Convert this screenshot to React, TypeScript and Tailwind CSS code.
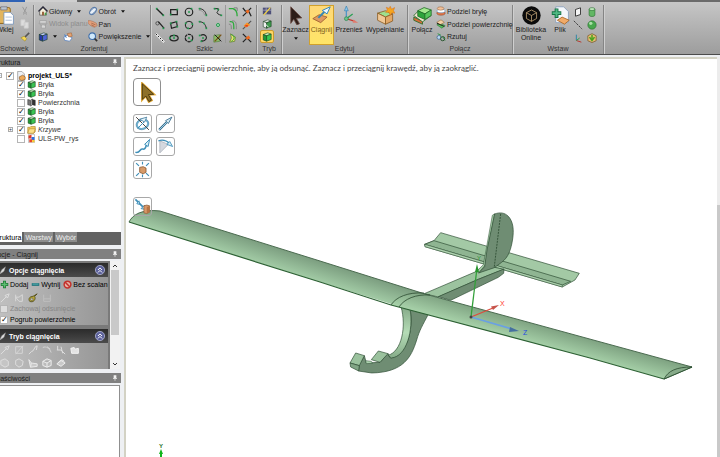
import React from 'react';

interface IconProps {
  size?: string;
  children: React.ReactNode;
}

const Icon: React.FC<IconProps> = ({ size = 'size-[10px]', children }) => (
  <svg viewBox="0 0 12 12" className={`${size} shrink-0`} fill="none" stroke="#222" strokeWidth="1.2" aria-hidden="true">
    {children}
  </svg>
);

const Dots = ({ at }: { at: number[][] }) => (
  <g fill="#1f9a4c" stroke="none">
    {at.map(([x, y], i) => (
      <rect key={i} x={x - 1} y={y - 1} width="2" height="2" />
    ))}
  </g>
);

const Caret = () => (
  <svg viewBox="0 0 6 4" className="w-[4px] h-[3px] shrink-0" aria-hidden="true">
    <path d="M0 0h6L3 4z" fill="#111" />
  </svg>
);

const Cube = ({ top, left, right }: { top: string; left: string; right: string }) => (
  <g stroke="#173d1c" strokeWidth=".7" strokeLinejoin="round">
    <path d="M1.5 3L7 1l4 1.5L5.500 4.500z" fill={top} />
    <path d="M1.500 3l4 1.500V11l-4-1.500z" fill={left} />
    <path d="M5.500 4.500l5.500-2V9l-5.500 2z" fill={right} />
  </g>
);

const greenCube = <Cube top="#c8f2c0" left="#1f9a35" right="#39c452" />;

const sketchTools = [
  { name: 'Linia', icon: <><path d="M2 2l8 8" strokeWidth="1.6" /><Dots at={[[2, 2], [10, 10]]} /></> },
  { name: 'Prostokąt', icon: <><path d="M2 3h8v6H2z" strokeWidth="1.5" /><Dots at={[[2, 9], [10, 3]]} /></> },
  { name: 'Okrąg', icon: <><circle cx="6" cy="6" r="4.500" strokeWidth="1.4" /><Dots at={[[6, 6], [9, 2]]} /></> },
  { name: 'Łuk styczny', icon: <><path d="M1 2c5 0 8 3 9 8" /><path d="M1 4c4 0 6 2 7 6" stroke="#888" strokeWidth=".8" /><Dots at={[[2, 2], [10, 10]]} /></> },
  { name: 'Splajn', icon: <><path d="M1 2h5c2 0 0 3-1 4s1 3 5 4" /><Dots at={[[2, 2], [6, 3], [10, 10]]} /></> },
  { name: 'Linia styczna', icon: <><circle cx="3" cy="4" r="2" stroke="#555" /><path d="M4 2l7 8" strokeWidth="1.5" /><Dots at={[[10, 10]]} /></> },
  { name: 'Prostokąt trzypunktowy', icon: <><path d="M2 4l7-2 1 6-7 2z" strokeWidth="1.4" /><Dots at={[[2, 4], [10, 8], [9, 2]]} /></> },
  { name: 'Okrąg trzypunktowy', icon: <><circle cx="6" cy="6" r="4.500" /><Dots at={[[2, 4], [10, 5], [5, 10]]} /></> },
  { name: 'Łuk trzypunktowy', icon: <><path d="M1 2c5 0 8 3 9 8" /><Dots at={[[2, 2], [7, 4], [10, 10]]} /></> },
  { name: 'Punkt', icon: <><circle cx="6" cy="6" r="1.800" stroke="#1f9a4c" fill="#b7e4c0" /></> },
  { name: 'Linia konstrukcyjna', icon: <><path d="M1 1l10 10" stroke="#eee" strokeWidth="2.500" /><path d="M1 1l10 10" strokeDasharray="2 1.500" /></> },
  { name: 'Elipsa', icon: <><ellipse cx="6" cy="6" rx="5" ry="3.300" strokeWidth="1.500" /><Dots at={[[6, 6], [6, 3], [1, 6]]} /></> },
  { name: 'Wielokąt', icon: <><circle cx="6" cy="6" r="4.500" strokeWidth="1.500" strokeDasharray="4 .8" /><Dots at={[[6, 6], [9, 9]]} /></> },
  { name: 'Łuk', icon: <><path d="M3 3c5-3 9 2 6 5-2 2-4 2-5 1" strokeWidth="1.4" /><Dots at={[[2, 3], [6, 6], [4, 10]]} /></> },
  { name: 'Krzywa powierzchni', icon: <><path d="M1 3l7-1v8l-7 1z" fill="#8dbb6a" stroke="#4d7d35" strokeWidth=".7" /><path d="M2 10l8-8" stroke="#7a5216" strokeWidth="1.500" /><path d="M2 2l8 8" /></> },
];

const trimTools = [
  { name: 'Zaokrąglij róg', icon: <><path d="M1 2h5c3 1 5 4 5 9" stroke="#2eaa3c" strokeWidth="1.600" /><path d="M7 1h4v4" strokeWidth=".8" stroke="#666" /></> },
  { name: 'Przytnij', icon: <><path d="M1 1l3 4 4 0 3 6M11 1L1 11" strokeWidth="1.500" /><path d="M4 5l3-2 2 2-2 3z" fill="#f06a20" stroke="none" /></> },
  { name: 'Odsuń krzywą', icon: <><path d="M2 2c5-1 5 2 5 9" stroke="#2eaa3c" strokeWidth="1.500" /><path d="M5 1c5 0 5 3 5 10M1 5c3 0 3 2 3 6" strokeWidth=".9" stroke="#777" /></> },
  { name: 'Podziel krzywą', icon: <><path d="M1 11L11 1" stroke="#555" strokeWidth="1.400" /><path d="M2 7l4-4 4 3-5 3z" fill="#f79224" stroke="none" /><path d="M4 6h3v2H4z" fill="#e43c20" stroke="none" /></> },
  { name: 'Rzutuj na szkic', icon: <><path d="M3 1l6 4-1 5-6 1 2-5z" fill="#e8de70" stroke="#557a22" strokeWidth=".8" /><path d="M4 2c5 2 4 6 0 8" stroke="#2eaa3c" /></> },
  { name: 'Utwórz róg', icon: <><path d="M1 1l10 10M1 11L7 5" strokeWidth="1.500" /><path d="M4 6l4-3 2 3-3 2z" fill="#f06a20" stroke="none" /></> },
];

const ribbonArt = {
  paste: <><rect x="1" y="1" width="8" height="10" rx="1" fill="#e2b55e" stroke="#8d6218" strokeWidth=".6" /><path d="M3 .500h4v2H3z" fill="#b9c4cf" stroke="#667" strokeWidth=".4" /><path d="M5 4h4l2 2v5.500H5z" fill="#fff" stroke="#6f8fb8" strokeWidth=".5" /><path d="M6 7h4M6 9h4" stroke="#9cb4d4" strokeWidth=".5" /></>,
  cut: <path d="M3 1l4 7M8 1L5 8M4 10a1 1 0 100-2M8 10a1 1 0 110-2" stroke="#999" />,
  copy: <path d="M1 1h5v7H1zM5 4h5v7H5z" fill="#ddd" stroke="#ccc" strokeWidth=".8" />,
  brush: <><path d="M11 1L6 6" stroke="#555" strokeWidth="2" /><path d="M1 7l4-2 3 3-2 3z" fill="#f5d750" stroke="#937d25" strokeWidth=".6" /></>,
  home: <><path d="M2 6v5h8V6L6 2z" fill="#f5efdc" stroke="#444" strokeWidth=".8" /><path d="M.500 6.500L6 1l5.500 5.500" strokeWidth="1.500" stroke="#223" /><path d="M5 7h2v4H5z" fill="#8a4a22" stroke="none" /><path d="M8 8h2v3H8z" fill="#48a148" stroke="none" /></>,
  plan: <><path d="M2 2h8v3H2zM4 7h5v4H4zM1 5l3 3M11 5L8 8" stroke="#999" fill="#d8d8d8" strokeWidth=".8" /></>,
  blueCube: <Cube top="#c4ccff" left="#2436a8" right="#4e63d8" />,
  spin: <><ellipse cx="6" cy="6" rx="3" ry="5" transform="rotate(40 6 6)" fill="#e8eff7" stroke="#5a7ba8" /><ellipse cx="6" cy="6" rx="5.500" ry="2.200" transform="rotate(-40 6 6)" stroke="#5a7ba8" strokeWidth=".8" /></>,
  hand: <><path d="M0 2h3l3 1 4 2 1 3-3 2-3-1-3-2-2-2z" fill="#e2a07c" stroke="#a5694c" strokeWidth=".6" /><path d="M4 5l5 2M4 7l4 2" stroke="#8c4c30" strokeWidth=".7" /></>,
  lens: <><circle cx="5" cy="5" r="4" fill="#cfe8fb" stroke="#3f6da8" strokeWidth="1.300" /><path d="M8 8l3 3" stroke="#333" strokeWidth="2" /></>,
  view: <><path d="M1 6l4-2 6 3-3 4-6-1z" fill="#fff" stroke="#4a78c0" strokeWidth=".8" /><path d="M5 2l5-1 1 4-4 1z" fill="#e6a370" stroke="#965b30" strokeWidth=".6" /><path d="M2 3l2 4" stroke="#3d7ccc" /></>,
  sketchMode: <><path d="M1 2h10v8H1z" fill="#4d4f78" stroke="none" /><path d="M1 5h10M5 2v8" stroke="#d2d2e8" strokeWidth=".6" /><path d="M2 11l8-9" stroke="#f0d346" strokeWidth="1.600" /></>,
  section: <><Cube top="#e3e9e3" left="#f1f1f1" right="#3d9b4c" /><path d="M3 5l5 5" stroke="#eee" /></>,
  solid: greenCube,
  cursor: <path d="M3 .500l7 7-3.500.2 2 3.500-1.600.8-2-3.600L3 11z" fill="#2d1d18" stroke="#6b4b42" strokeWidth=".5" />,
  pull: <><path d="M.500 8l4-2.500 5 1.500-4 3.500z" fill="#dd9a62" stroke="#9a5a28" strokeWidth=".5" /><path d="M4 7.500l4-4" stroke="#3a86b4" strokeWidth="1.300" /><path d="M11.500.500L9.500 5 6.500 2.800z" fill="#eaf7ff" stroke="#2d83b8" strokeWidth=".6" /></>,
  move: <><path d="M4 8V2" stroke="#4c95c8" strokeWidth=".8" /><path d="M4 0L2.800 3h2.400z" fill="#8fc8ec" stroke="#337eb0" strokeWidth=".4" /><path d="M4 8l5 1.500" stroke="#c23c33" strokeWidth=".8" /><path d="M11.500 10.500L8.500 8.500l-.5 2z" fill="#e07a6c" stroke="none" /><path d="M4 8l4-3" stroke="#29a054" strokeWidth=".8" /><circle cx="4" cy="8" r="1.200" fill="#6dc289" stroke="#257f49" strokeWidth=".4" /></>,
  fill: <><g stroke="#8a5a20" strokeWidth=".5"><path d="M1 4.500l5-1.500 4.500 2L6 7z" fill="#9de08f" /><path d="M1 4.500L6 7v4.500L1 9z" fill="#f1c896" /><path d="M6 7l4.500-2v4.500L6 11.500z" fill="#e2a868" /></g><path d="M9 .200l.8 1.800L11.800 1 11 3l1 1.500-2-.2-1 1.500-.8-1.800L6 4l1.200-1.500L6.500.800l1.800.7z" fill="#f5a51d" stroke="#d86813" strokeWidth=".3" /></>,
  combine: <g stroke="#1f6a25" strokeWidth=".5"><path d="M.500 7L6 9.500v2L.500 9z" fill="#d56c39" /><path d="M.500 6l3-3 8 3-5.500 4z" fill="#f2e4d0" /><path d="M3 3l4-2 4.500 1.500-4 2.500z" fill="#a5e990" /><path d="M3 3l4.500 2v3.500L3 6.500z" fill="#2da43c" /><path d="M7.500 5l4-2.500V6l-4 2.500z" fill="#58c65c" /></g>,
  splitBody: <g strokeWidth=".6"><ellipse cx="6" cy="8.500" rx="5" ry="2.500" fill="#e2784a" stroke="#8c3f1d" /><ellipse cx="6" cy="6" rx="5" ry="2.200" fill="#fff" stroke="#3f7fb8" /><ellipse cx="5.500" cy="3" rx="4" ry="2" fill="#f3c29b" stroke="#8c5a30" /></g>,
  splitFace: <g strokeWidth=".6"><path d="M1 7l6 4 4-3-6-3z" fill="#57c45d" stroke="#1c6c28" /><path d="M1 4l5-3 4 3-5 3z" fill="#f3d2a8" stroke="#845622" /><path d="M1 5l9 4" stroke="#222" strokeWidth="1.200" /></g>,
  project: <><path d="M2 2l4 2M8 6l3 4" stroke="#2b9b45" /><circle cx="3.500" cy="6.500" r="2.300" fill="#b9d8f2" stroke="#335d8c" strokeWidth=".8" /><circle cx="8" cy="8" r="2.500" stroke="#2a5630" /></>,
  library: <><circle cx="6" cy="6" r="5.800" fill="#0b0b0b" stroke="none" /><path d="M6 2.500l3.200 1.700v3.700L6 9.700 2.800 7.900V4.200zM2.800 4.200L6 6l3.200-1.800M6 6v3.700" stroke="#c5a679" strokeWidth=".5" /></>,
  file: <><path d="M3 .500h5l3 3v7H3z" fill="#f4f7fb" stroke="#8399b8" strokeWidth=".5" /><path d="M4 9l3-2 4.500 2-3 2.500z" fill="#f0ab68" stroke="#a4601f" strokeWidth=".5" /><path d="M3.500 1.500v6M.500 4.500h6" stroke="#167344" strokeWidth="2.400" /><path d="M3.500 2v5M1 4.500h5" stroke="#51b884" strokeWidth="1.200" /></>,
  plane: <path d="M3 3l6-2v8l-6 2z" fill="#f5f5f5" strokeWidth="1" />,
  axis: <path d="M1 1l10 10" stroke="#444" strokeDasharray="3 1.200" />,
  origin: <><path d="M4 9V2" stroke="#2f86a8" /><path d="M4 9l6 2" stroke="#b83a31" /><path d="M4 9l4-3" stroke="#2fa04c" /></>,
  cylinder: <><path d="M2.500 2.500v7c0 2.500 7 2.500 7 0v-7" fill="#63b765" stroke="#276b2e" strokeWidth=".7" /><ellipse cx="6" cy="2.500" rx="3.500" ry="1.700" fill="#c2eabf" stroke="#276b2e" strokeWidth=".7" /></>,
  sphere: <><circle cx="6" cy="6" r="5" fill="#48a74d" stroke="#276b2e" strokeWidth=".7" /><circle cx="4.500" cy="4" r="2" fill="#a9dfa6" stroke="none" /></>,
  shell: <><path d="M6 .800l5 2.500v6L6 11.500l-5-2.200v-6z" fill="#e4bd73" stroke="#765020" strokeWidth=".8" /><path d="M6 2v5M3 5l3 4 3-4" stroke="#45a31d" strokeWidth="1.800" /></>,
};

const Group = ({ label, className = '', children }: { label: string; className?: string; children: React.ReactNode }) => (
  <section className={`flex flex-col shrink-0 border-r border-[#858585] shadow-[1px_0_0_#cfcfcf] ${className}`}>
    <div className="flex h-[38px]">{children}</div>
    <h2 className="h-[12px] leading-[12px] text-center text-[#333]">{label}</h2>
  </section>
);

const SmallButton = ({ art, label, caret, muted }: { art: React.ReactNode; label: string; caret?: boolean; muted?: boolean }) => (
  <button className={`flex items-center gap-px h-[13px] whitespace-nowrap ${muted ? 'text-[#8c8c8c]' : ''}`}>
    <Icon>{art}</Icon>
    {label}
    {caret && <span className="pl-1"><Caret /></span>}
  </button>
);

const BigButton = ({ art, label, caret, className = '' }: { art: React.ReactNode; label: string; caret?: boolean; className?: string }) => (
  <button className={`flex flex-col items-center h-[40px] pt-px shrink-0 ${className}`}>
    <Icon size="size-[19px]">{art}</Icon>
    <span className="leading-[8px] pt-px whitespace-pre-line text-center">{label}</span>
    {caret && <span className="pt-[3px] flex"><Caret /></span>}
  </button>
);

const IconButton = ({ art, name, className = 'w-[14px]' }: { art: React.ReactNode; name: string; className?: string }) => (
  <button aria-label={name} className={`flex items-center justify-center h-[13px] ${className}`}>
    <Icon>{art}</Icon>
  </button>
);

const Ribbon = () => (
  <header className="shrink-0 overflow-hidden text-[#1c1c1c]">
    <div className="flex h-[2px] bg-[#6a6a6a]">
      <div className="w-[25px] bg-[#2f62b5]" />
      <div className="w-[52px] bg-[#cfcfcf]" />
    </div>
    <div className="flex h-[53px] pt-[3px] bg-linear-to-b from-[#c6c6c6] to-[#9d9d9d] border-b border-[#4b4b4b]">
      <Group label="Schowek" className="w-[34px] pr-[5px]">
        <BigButton art={ribbonArt.paste} label="Wklej" className="w-[26px] -ml-[8px]" />
        <div className="flex flex-col shrink-0">
          <IconButton art={ribbonArt.cut} name="Wytnij" />
          <IconButton art={ribbonArt.copy} name="Kopiuj" />
          <IconButton art={ribbonArt.brush} name="Malarz formatów" />
        </div>
      </Group>
      <Group label="Zorientuj" className="w-[117px] pl-[4px]">
        <div className="flex flex-col items-start w-[50px]">
          <SmallButton art={ribbonArt.home} label="Główny" caret />
          <SmallButton art={ribbonArt.plan} label="Widok planu" muted />
          <div className="flex items-center">
            <SmallButton art={ribbonArt.blueCube} label="" caret />
            <span className="pl-1 flex"><IconButton art={ribbonArt.view} name="Poprzedni widok" /></span>
          </div>
        </div>
        <div className="flex flex-col items-start">
          <SmallButton art={ribbonArt.spin} label="Obrót" caret />
          <SmallButton art={ribbonArt.hand} label="Pan" />
          <SmallButton art={ribbonArt.lens} label="Powiększenie" caret />
        </div>
      </Group>
      <Group label="Szkic" className="w-[106px] pl-[2px]">
        <div className="grid grid-cols-5 w-[73px] border-r border-[#999]">
          {sketchTools.map((tool) => (
            <IconButton key={tool.name} art={tool.icon} name={tool.name} />
          ))}
        </div>
        <div className="grid grid-cols-2 w-[28px]">
          {trimTools.map((tool) => (
            <IconButton key={tool.name} art={tool.icon} name={tool.name} />
          ))}
        </div>
      </Group>
      <Group label="Tryb" className="w-[25px] px-[3px]">
        <div className="flex flex-col">
          <IconButton art={ribbonArt.sketchMode} name="Tryb szkicu" className="w-[14px]" />
          <IconButton art={ribbonArt.section} name="Tryb przekroju" className="w-[14px]" />
          <IconButton art={ribbonArt.solid} name="Tryb 3D" className="w-[14px] rounded-xs border border-[#c99b2c] bg-[#ffd763]" />
        </div>
      </Group>
      <Group label="Edytuj" className="w-[126px]">
        <BigButton art={ribbonArt.cursor} label="Zaznacz" caret className="w-[27px]" />
        <BigButton
          art={ribbonArt.pull}
          label="Ciągnij"
          className="w-[25px] outline outline-[#d0a02c] -outline-offset-1 bg-linear-to-b from-[#ffd878] to-[#ffe566] text-[#7a5c1a]"
        />
        <BigButton art={ribbonArt.move} label="Przenieś" className="w-[30px]" />
        <BigButton art={ribbonArt.fill} label="Wypełnianie" className="w-[42px]" />
      </Group>
      <Group label="Połącz" className="w-[105px]">
        <BigButton art={ribbonArt.combine} label="Połącz" className="w-[28px]" />
        <div className="flex flex-col items-start">
          <SmallButton art={ribbonArt.splitBody} label="Podziel bryłę" />
          <SmallButton art={ribbonArt.splitFace} label="Podziel powierzchnię" />
          <SmallButton art={ribbonArt.project} label="Rzutuj" />
        </div>
      </Group>
      <Group label="Wstaw" className="w-[91px]">
        <BigButton art={ribbonArt.library} label={'Biblioteka\nOnline'} className="w-[36px]" />
        <BigButton art={ribbonArt.file} label="Plik" className="w-[22px]" />
        <div className="grid grid-cols-2">
          <IconButton art={ribbonArt.plane} name="Płaszczyzna" />
          <IconButton art={ribbonArt.cylinder} name="Walec" />
          <IconButton art={ribbonArt.axis} name="Oś" />
          <IconButton art={ribbonArt.sphere} name="Kula" />
          <IconButton art={ribbonArt.origin} name="Początek" />
          <IconButton art={ribbonArt.shell} name="Powłoka" />
        </div>
      </Group>
    </div>
  </header>
);

const PaneTitle = ({ children }: { children: React.ReactNode }) => (
  <h2 className="flex items-center justify-between h-[10px] pr-1 bg-[#808080] text-[#1a1a1a] shrink-0">
    {children}
    <svg viewBox="0 0 6 8" className="w-[4px] h-[6px]" aria-hidden="true">
      <path d="M1 0h4v4h1v1H0V4h1zM2.500 5h1v3h-1z" fill="#f2f2f2" />
    </svg>
  </h2>
);

const Check = ({ checked, muted }: { checked?: boolean; muted?: boolean }) => (
  <input
    type="checkbox"
    defaultChecked={checked}
    disabled={muted}
    className="appearance-none size-[8px] shrink-0 border border-[#b5b5b5] bg-white disabled:bg-[#ddd] text-black leading-[6px] text-center checked:before:content-['✓'] before:block before:font-bold before:text-[8px] before:font-['DejaVu_Sans']"
  />
);

const treeArt = {
  body: greenCube,
  surface: <g stroke="#222" strokeWidth=".6"><path d="M1 2l4 1v7L1 9z" fill="#777" /><path d="M5 3l2-2v8l-2 2z" fill="#ccc" /><path d="M7 2l4 1v7L7 9z" fill="#333" /></g>,
  folder: <><path d="M1 3h3l1-1h6v7l-2 2H1z" fill="#f3c95e" stroke="#9d7118" strokeWidth=".7" /><path d="M1 11l2-6h8l-2 6z" fill="#fbe08a" stroke="#9d7118" strokeWidth=".6" /></>,
  drawing: <><path d="M2 .500h8v11H2z" fill="#fff" stroke="#888" strokeWidth=".6" /><path d="M2 2l4-1v5H2z" fill="#e03a2b" stroke="none" /><path d="M6 4h4v4H6z" fill="#2b6fe0" stroke="none" /><path d="M3 7h4v4H3z" fill="#e8452b" stroke="none" /><path d="M7 8h3v3H7z" fill="#f5c928" stroke="none" /></>,
  project: <><path d="M2 .500h5l3 3v8H2z" fill="#eef1f6" stroke="#777" strokeWidth=".7" /><path d="M4 7l4-2 3 2v3l-4 1.500L4 10z" fill="#edaa5a" stroke="#7d4c1c" strokeWidth=".7" /></>,
};

const treeItems = [
  { name: 'Bryła', art: treeArt.body, checked: true },
  { name: 'Bryła', art: treeArt.body, checked: true },
  { name: 'Powierzchnia', art: treeArt.surface, checked: false },
  { name: 'Bryła', art: treeArt.body, checked: true },
  { name: 'Bryła', art: treeArt.body, checked: true },
  { name: 'Krzywe', art: treeArt.folder, checked: true, expandable: true, italic: true },
  { name: 'ULS-PW_rys', art: treeArt.drawing, checked: false },
];

const Expander = ({ sign }: { sign: string }) => (
  <button className="flex items-center justify-center size-[5px] border border-[#aaa] bg-white text-[5px] leading-none">{sign}</button>
);

const OptionsHeader = ({ children }: { children: React.ReactNode }) => (
  <div className="flex items-center h-[14px] pl-[4px] pr-[3px] bg-linear-to-b from-[#2b2b2b] to-[#4b4b4b] text-white font-bold">
    <Icon size="size-[9px]"><path d="M2 11l3-6 5-4-2 6z" fill="#ddd" stroke="#888" strokeWidth=".6" /></Icon>
    <h3 className="flex-1 pl-[2px]">{children}</h3>
    <button aria-label="Zwiń">
      <Icon><circle cx="6" cy="6" r="5.500" fill="#5d629c" stroke="#c4c8e8" strokeWidth=".8" /><path d="M3.500 6L6 3.500 8.500 6M3.500 9L6 6.500 8.500 9" stroke="#fff" /></Icon>
    </button>
  </div>
);

const faded = [
  <path d="M1 11l7-7M6 3l5-2-2 5z" stroke="#ddd" />,
  <path d="M2 2h8v8H2zM2 11l9-10" stroke="#d4d4d4" />,
  <path d="M1 11l3-3 2-1 3-5 2-1-1 5" stroke="#ddd" />,
  <path d="M1 3c4-2 8 1 10 6M6 2l4 3" stroke="#d4d4d4" />,
  <path d="M2 1v5M1 6h5l5 5M6 2l2 8" stroke="#ddd" />,
  <path d="M1 4l4-1 1 2 4-1v6H2z" fill="#e2e2e2" stroke="#f2f2f2" />,
];

const fadedSolids = [
  <path d="M1 3l5-2 4 3v5l-4 2-5-3z" fill="#c5c5c5" stroke="#ddd" />,
  <path d="M2 3l4-2 5 3-1 5-4 2-4-3z" fill="#bbb" stroke="#ddd" />,
  <path d="M1 2l3 4 7 1v3l-8 1zM4 6l-1 5" fill="#c9c9c9" stroke="#e8e8e8" />,
  <path d="M1 4l5-3 5 2v6l-5 2-5-2zM1 4l5 2 5-3M6 6v5" fill="#bbb" stroke="#ececec" />,
  <path d="M1 7l5-4 5 3-5 4zM3 5l4-3 3 2" fill="#c9c9c9" stroke="#ececec" />,
];

const Sidebar = () => (
  <aside className="flex flex-col w-[129px] -ml-[8px] pt-[2px] shrink-0 bg-[#eef0f3]">
    <PaneTitle>Struktura</PaneTitle>
    <ul className="h-[165px] shrink-0 pt-1 bg-white text-[#333]">
      <li className="flex items-center h-[9px] pl-[5px]">
        <Expander sign="−" />
        <label className="flex items-center pl-[4px] font-bold text-black">
          <Check checked />
          <span className="px-[2px]"><Icon>{treeArt.project}</Icon></span>
          projekt_ULS*
        </label>
      </li>
      {treeItems.map((item, index) => (
        <li key={index} className="flex items-center h-[9px] pl-[16px]">
          <span className="w-[9px]">{item.expandable && <Expander sign="+" />}</span>
          <label className={`flex items-center ${item.italic ? 'italic' : ''}`}>
            <Check checked={item.checked} />
            <span className="px-[2px]"><Icon size="size-[9px]">{item.art}</Icon></span>
            {item.name}
          </label>
        </li>
      ))}
    </ul>
    <nav className="flex gap-[2px] h-[13px] pb-[3px] shrink-0 bg-[#626262] leading-[9px]">
      <button className="bg-white text-black px-px">Struktura</button>
      <button className="bg-[#8c8c8c] text-[#eee] px-px">Warstwy</button>
      <button className="bg-[#8c8c8c] text-[#eee] px-px">Wybór</button>
    </nav>
    <div className="flex flex-col pt-1 shrink-0">
      <PaneTitle>Opcje - Ciągnij</PaneTitle>
      <div className="flex h-[110px] pt-[2px]">
        <div className="flex-1 flex flex-col gap-[4px] px-[2px] pt-[2px] bg-[#7a7a7a] overflow-hidden">
          <section>
            <OptionsHeader>Opcje ciągnięcia</OptionsHeader>
            <div className="bg-linear-to-r from-[#c2c2c2] to-[#969696] pl-[6px] h-[48px] overflow-hidden">
              <div className="flex items-center gap-[3px] h-[15px] whitespace-nowrap">
                <button className="flex items-center gap-px">
                  <Icon size="size-[9px]"><path d="M6 1v10M1 6h10" stroke="#1f7a36" strokeWidth="4" /><path d="M6 2v8M2 6h8" stroke="#5ebc72" strokeWidth="2" /></Icon>
                  Dodaj
                </button>
                <button className="flex items-center gap-px">
                  <Icon size="size-[9px]"><path d="M1 6h10" stroke="#156f78" strokeWidth="3.500" /><path d="M2 5.500h8" stroke="#65b7b8" /></Icon>
                  Wytnij
                </button>
                <button className="flex items-center gap-px">
                  <Icon size="size-[9px]"><circle cx="6" cy="6" r="4.500" stroke="#c3312c" strokeWidth="2" fill="#e8b0a4" /><path d="M3 3l6 6" stroke="#c3312c" strokeWidth="2" /></Icon>
                  Bez scalan
                </button>
              </div>
              <div className="flex items-center gap-[4px] h-[11px]">
                <Icon>{faded[0]}</Icon>
                <Icon><path d="M2 2v8M2 5h4l4-3v8H6z" stroke="#d8d8d8" /></Icon>
                <Icon><path d="M2 10c-2-3 0-6 4-6l5-3-3 3c2 4-2 8-6 6z" fill="#b9a83c" stroke="#45400f" strokeWidth=".9" /><circle cx="4.500" cy="7.500" r="1.600" fill="#bbb" stroke="#45400f" strokeWidth=".5" /></Icon>
                <Icon><path d="M2 2v8h8V2M2 7h8" stroke="#bebebe" /></Icon>
              </div>
              <label className="flex items-center gap-[2px] h-[11px] text-[#868686]">
                <Check muted />
                Zachowaj odsunięcie
              </label>
              <label className="flex items-center gap-[2px] h-[11px]">
                <Check checked />
                Pogrub powierzchnie
              </label>
            </div>
          </section>
          <section>
            <OptionsHeader>Tryb ciągnięcia</OptionsHeader>
            <div className="bg-linear-to-r from-[#c2c2c2] to-[#969696] pl-[6px] h-[28px]">
              <div className="flex items-center gap-[4px] h-[14px]">
                {faded.map((art, i) => <Icon key={i}>{art}</Icon>)}
              </div>
              <div className="flex items-center gap-[4px] h-[12px]">
                {fadedSolids.map((art, i) => <Icon key={i}>{art}</Icon>)}
              </div>
            </div>
          </section>
        </div>
        <div className="flex flex-col items-center w-[10px] py-[3px] mr-px bg-[#f2f2f2]">
          <svg viewBox="0 0 6 4" className="w-[6px] h-[4px]" aria-hidden="true"><path d="M1 3l2-2 2 2" stroke="#333" fill="none" /></svg>
          <div className="w-[8px] h-[65px] mt-[2px] bg-[#c9c9c9]" />
          <svg viewBox="0 0 6 4" className="w-[6px] h-[4px] mt-auto" aria-hidden="true"><path d="M1 1l2 2 2-2" stroke="#333" fill="none" /></svg>
        </div>
      </div>
    </div>
    <div className="flex flex-col flex-1 pt-1">
      <PaneTitle>Właściwości</PaneTitle>
      <div className="flex-1 mt-[2px] mr-px border border-b-0 border-[#8f8f8f] bg-white" />
    </div>
  </aside>
);

const arrowBlue = '#3f8fb8';

const guideTools = [
  { name: 'Obróć', art: <><ellipse cx="6" cy="6.500" rx="4" ry="3.200" transform="rotate(-20 6 6.500)" stroke="#6fb0d0" strokeWidth="1.300" /><ellipse cx="6" cy="6.500" rx="4.600" ry="3.800" transform="rotate(-20 6 6.500)" stroke="#2f6f94" strokeWidth=".3" /><path d="M1.500 1.500l9 9" stroke="#444" strokeWidth=".7" /><path d="M2.500 9.500l5-5" stroke={arrowBlue} strokeWidth=".7" /><path d="M9 1.500L4 3l3.500 2z" fill="#e4f4fb" stroke="#2f6f94" strokeWidth=".5" /></> },
  { name: 'Kierunek', art: <><path d="M1.500 10.500l5.500-5.500" stroke="#33698a" strokeWidth="1.500" /><path d="M1.500 10.500l5.500-5.500" stroke="#9ed0e8" strokeWidth=".7" /><path d="M10.500 1.500L6 4l2 2z" fill="#d7edf7" stroke="#33698a" strokeWidth=".6" /></> },
  { name: 'Przeciągnij', art: <><path d="M1 10c2 1 3-1 4-2s2 1 3-1 0-1 1-2" stroke={arrowBlue} strokeWidth="1.100" /><path d="M11 1L7.500 4.500 10 6z" fill="#d7edf7" stroke={arrowBlue} strokeWidth=".7" /></> },
  { name: 'Pochylenie', art: <><path d="M2 2v8.500l6-6z" fill="#d5d8df" stroke="#a7abb4" strokeWidth=".5" /><path d="M1 2c3-1 6 0 8 2" stroke={arrowBlue} strokeWidth=".9" /><path d="M11 6L7 4.500l2-2z" fill="#d7edf7" stroke={arrowBlue} strokeWidth=".6" /></> },
  { name: 'Skaluj', art: <><path d="M1.500 1.500l2 2M10.500 1.500l-2 2M1.500 10.500l2-2M10.500 10.500l-2-2M6 .500v2M6 9.500v2" stroke={arrowBlue} strokeWidth=".8" /><path d="M4 4.500L6.500 4 8.500 5v3l-2 1L4 8z" fill="#d79a68" stroke="#7b4a22" strokeWidth=".5" /></> },
];

const GuideButton = ({ art, name }: { art: React.ReactNode; name: string }) => (
  <button aria-label={name} className="flex items-center justify-center size-[19px] rounded-[3px] border border-[#a8a8a8]">
    <Icon size="size-[17px]">{art}</Icon>
  </button>
);

const edge = '#2b4a30';

const Glider = () => (
  <svg
    viewBox="126 59 591 398"
    preserveAspectRatio="xMinYMin meet"
    className="absolute inset-0 w-full h-full"
    role="img"
    aria-label="Model szybowca"
  >
    <defs>
      <linearGradient id="leftWing" gradientUnits="userSpaceOnUse" x1="240" y1="236" x2="234" y2="255">
        <stop offset="0" stopColor="#7c9e80" />
        <stop offset="1" stopColor="#a3cca6" />
      </linearGradient>
      <linearGradient id="rightWing" gradientUnits="userSpaceOnUse" x1="560" y1="331" x2="555" y2="349">
        <stop offset="0" stopColor="#7fa382" />
        <stop offset="1" stopColor="#a6d0a8" />
      </linearGradient>
      <linearGradient id="hookInner" x1="0" y1="0" x2="0" y2="1">
        <stop offset="0" stopColor="#85a988" />
        <stop offset=".5" stopColor="#b5dcb6" />
        <stop offset="1" stopColor="#86ac89" />
      </linearGradient>
    </defs>

    {/* Tail, boom and hook */}
    <g transform="translate(330 200) scale(.3333)" stroke={edge} strokeWidth="2" strokeLinejoin="round">
      <path d="M332 98L748 220 735 240 697 261 285 140 284 133 312 122z" fill="#a3c9a5" />
      <path d="M312 122L722 244 697 255 284 133z" fill="#8fb592" />
      <path d="M284 133L697 255v6L285 140z" fill="#b2d6b3" strokeWidth="1.500" />

      <path d="M283 281L440 214 465 196 522 208 445 238 325 291z" fill="#9cc39f" />
      <path d="M325 290L445 238 522 207 521 220 505 232 362 301z" fill="#6f8d73" />

      <path d="M487 46L494 41 474 150 466 195 446 219 440 214 460 194 470 140z" fill="#a5cca7" strokeWidth="1.500" />
      <path d="M494 42C510 36 524 38 535 49 550 65 552 90 548 117 543 150 535 172 515 187L493 203 446 219 464 200 471 150z" fill="#6f8d73" />
      <path d="M512 42L493 200" strokeWidth="2.500" strokeDasharray="6 3" />

      <path d="M240 325L295 343C278 375 268 392 260 420 244 472 220 517 125 519L85 513 88 494 103 467 109 489 150 487 174 461 181 474C230 465 252 390 240 325z" fill="#6f8d73" />
      <path d="M213 320L240 327C251 390 230 470 184 474L174 466C215 455 230 380 213 320z" fill="url(#hookInner)" />
      <path d="M77 459L103 467 88 497 60 489z" fill="#9bc29e" />
      <path d="M60 489L88 497 86 513 62 501z" fill="#81a585" />
      <path d="M145 453L174 461 150 487 124 479z" fill="#9bc29e" />
      <path d="M107 482L124 484 127 490 109 491z" fill="#aed3b0" strokeWidth="1.500" />
    </g>

    {/* Wings */}
    <g strokeLinejoin="round">
      <path d="M129 222C133 214 143 209 160 211L320 261 425 294 398 306 320 282z" fill="url(#leftWing)" />
      <path d="M391 305C396 297 408 291 425 294L692 367 664 379 590 358z" fill="url(#rightWing)" />
      <path d="M129 222C133 214 143 209 160 211L320 261 425 294 692 367" fill="none" stroke="#4b6b50" />
      <path d="M129 222L320 282 391 305 590 358 664 379 692 367" fill="none" stroke="#2d6034" strokeWidth="1.200" />
      <path d="M664 379C668 371 676 367 692 367z" fill="#86aa89" stroke={edge} strokeWidth=".8" />
      <path d="M391 305C396 297 408 292 424 293M399 307C404 299 416 294 430 295" fill="none" stroke={edge} strokeWidth=".8" />
    </g>

    {/* Model axes */}
    <g fontFamily="Liberation Sans" fontSize="6" strokeWidth="1.300">
      <path d="M471 317L477 268" stroke="#33a03a" />
      <path d="M477 264l2 8h-4z" fill="#26942d" />
      <text x="477" y="260" fill="#26942d">Y</text>
      <path d="M471 317L493 308" stroke="#de4a3c" />
      <path d="M499 305l-8 1.500 2 3.500z" fill="#c6524a" />
      <text x="500" y="306" fill="#ff3b30" fontSize="7">X</text>
      <path d="M471 317L512 329" stroke="#6aa0e4" strokeWidth="1.600" />
      <path d="M519 331l-9-4-1 5z" fill="#45709f" />
      <text x="523" y="335" fill="#244be0" fontSize="7">Z</text>
      <circle cx="471" cy="317" r="1.500" fill="#444" />
      <text x="159" y="448" fill="#1b6b22" fontWeight="bold">Y</text>
      <path d="M161 449l2 5h-4zM160 453h2v4h-2z" fill="#10b61c" />
    </g>
  </svg>
);

const Viewport = () => (
  <main className="relative flex-1 min-w-0 overflow-hidden bg-white border-l-2 border-t-2 border-[#d3d2c4]">
    <Glider />
    <div className="relative flex flex-col items-start pl-[7px] pt-[4px]">
      <p className="h-[11px] leading-[10px] text-[8px] font-['Lato','Liberation_Sans',sans-serif] text-[#444] whitespace-nowrap">
        Zaznacz i przeciągnij powierzchnię, aby ją odsunąć. Zaznacz i przeciągnij krawędź, aby ją zaokrąglić.
      </p>
      <button aria-label="Zaznacz" className="flex items-center justify-center size-[28px] mt-1 rounded-[4px] border border-[#8f8f8f]">
        <Icon size="size-[21px]">
          <path d="M3 1l6.500 6-3 .2 1.800 3.200-1.500.8L5 8 3 10z" fill="#8a6a1c" stroke="#e0a93a" strokeWidth="1.400" />
          <path d="M3 1l6.500 6-3 .2 1.800 3.200-1.500.8L5 8 3 10z" fill="#8d7029" stroke="#40310c" strokeWidth=".5" />
        </Icon>
      </button>
      <div className="grid grid-cols-2 gap-[4px] pt-2">
        {guideTools.map((tool) => (
          <GuideButton key={tool.name} art={tool.art} name={tool.name} />
        ))}
      </div>
      <div className="pt-[18px]">
        <GuideButton
          name="Do obiektu"
          art={<><path d="M1 1l6 6" stroke={arrowBlue} strokeWidth="1.200" /><path d="M2 4l2 .5L3.500 2zM8 8l-3-.5L7.500 5z" fill="#d7edf7" stroke={arrowBlue} strokeWidth=".7" /><path d="M7 5.500L9 5l2 .5v4.500L9 11l-2-.5z" fill="#d9986a" stroke="#8f5c34" strokeWidth=".5" /><path d="M9 6.500V11l2-1V5.500z" fill="#b87444" stroke="none" /></>}
        />
      </div>
    </div>
  </main>
);

export default function App() {
  return (
    <div className="flex flex-col h-screen overflow-hidden bg-[#eef0f3] font-['Liberation_Sans',sans-serif] text-[7px] leading-[9px]">
      <Ribbon />
      <div className="flex flex-1 min-h-0">
        <Sidebar />
        <div className="flex flex-1 min-w-0 pl-[3px] pt-[2px]">
          <Viewport />
          <div className="flex flex-col w-[3px] bg-[#ececec]">
            <div className="flex-1 mt-[148px] bg-[#c9c9c9]" />
          </div>
        </div>
      </div>
    </div>
  );
}
